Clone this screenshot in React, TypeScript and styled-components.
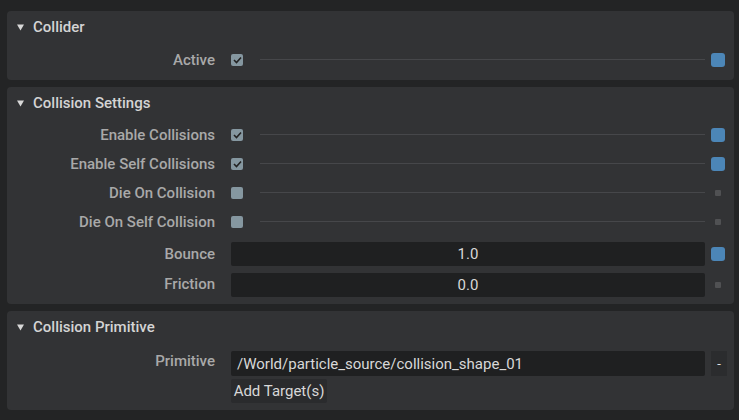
import React from 'react';
import styled, { createGlobalStyle } from 'styled-components';

const GlobalStyle = createGlobalStyle`
  html, body {
    margin: 0;
    padding: 0;
    background: #232425;
    font-family: Roboto, "Liberation Sans", sans-serif;
  }
`;

const Page = styled.div`
  width: 739px;
  height: 420px;
  box-sizing: border-box;
  padding: 11px 5px 0 7px;
  background: #232425;
  display: flex;
  flex-direction: column;
  gap: 7px;
`;

const Panel = styled.section<{ $bottom?: number }>`
  background: #323335;
  border-radius: 4px;
  padding-bottom: ${(p) => p.$bottom ?? 6}px;
`;

const Header = styled.div`
  height: 32px;
  display: flex;
  align-items: center;
  padding-left: 10px;
  gap: 9px;
  color: #d4d4d4;
  font-size: 15px;
  font-weight: 500;
`;

const Body = styled.div<{ $top?: number }>`
  padding-top: ${(p) => p.$top ?? 1}px;
  padding-right: 3px;
  display: flex;
  flex-direction: column;
`;

const Row = styled.div<{ $h: number }>`
  height: ${(p) => p.$h}px;
  display: grid;
  grid-template-columns: 208px 1fr 26px;
  column-gap: 16px;
  align-items: center;
`;

const Label = styled.div<{ $raise?: number }>`
  text-align: right;
  color: #a9a9a9;
  font-size: 15px;
  font-weight: 500;
  margin-top: ${(p) => (p.$raise ? -p.$raise * 2 : 0)}px;
`;

const CheckLine = styled.div`
  display: flex;
  align-items: center;
  gap: 17px;
  margin-right: -16px;
`;

const Check = styled.div`
  width: 12px;
  height: 12px;
  border-radius: 2px;
  background: #8597a0;
  flex: none;
  display: flex;
  align-items: center;
  justify-content: center;
`;

const Line = styled.div`
  flex: 1;
  height: 1px;
  background: #46474a;
`;

const Indicator = styled.div<{ $on: boolean }>`
  justify-self: center;
  width: ${(p) => (p.$on ? 14 : 6)}px;
  height: ${(p) => (p.$on ? 14 : 6)}px;
  border-radius: ${(p) => (p.$on ? 3 : 1)}px;
  background: ${(p) => (p.$on ? '#4c86b7' : '#505153')};
`;

const FloatGroup = styled.div`
  margin-top: 2px;
  display: flex;
  flex-direction: column;
`;

const Field = styled.div<{ $align?: string; $h?: number }>`
  height: ${(p) => p.$h ?? 24}px;
  margin-right: -16px;
  background: #1f2021;
  border-radius: 2px;
  display: flex;
  align-items: center;
  justify-content: ${(p) => p.$align ?? 'center'};
  padding: 0 6px;
  color: #d8d8d8;
  font-size: 15px;
`;

const SmallButton = styled.div`
  justify-self: end;
  margin-right: 4px;
  width: 16px;
  height: 25px;
  background: #2b2c2e;
  color: #e0e0e0;
  font-size: 13px;
  display: flex;
  align-items: center;
  justify-content: center;
`;

const AddButton = styled.div`
  margin-top: 3px;
  margin-left: 224px;
  width: 96px;
  height: 24px;
  background: #2a2b2d;
  border-radius: 2px;
  color: #d8d8d8;
  font-size: 15px;
  display: flex;
  align-items: center;
  justify-content: center;
`;

const Triangle = () => (
  <svg width="7" height="7" viewBox="0 0 7 7">
    <polygon points="0,0.5 7,0.5 3.5,6.5" fill="#d8d8d8" />
  </svg>
);

const Tick = () => (
  <svg width="9" height="8" viewBox="0 0 9 8">
    <polyline points="1,4 3.5,6.5 8,1.5" fill="none" stroke="#222" strokeWidth="1.6" />
  </svg>
);

const BoolRow: React.FC<{ label: string; on: boolean }> = ({ label, on }) => (
  <Row $h={29}>
    <Label>{label}</Label>
    <CheckLine>
      <Check>{on && <Tick />}</Check>
      <Line />
    </CheckLine>
    <Indicator $on={on} />
  </Row>
);

const FloatRow: React.FC<{ label: string; value: string; changed: boolean }> = ({ label, value, changed }) => (
  <Row $h={31}>
    <Label $raise={changed ? 0 : 0.5}>{label}</Label>
    <Field>{value}</Field>
    <Indicator $on={changed} />
  </Row>
);

export default function App() {
  return (
    <>
      <GlobalStyle />
      <Page>
        <Panel>
          <Header>
            <Triangle />
            Collider
          </Header>
          <Body $top={2}>
            <BoolRow label="Active" on />
          </Body>
        </Panel>

        <Panel $bottom={4}>
          <Header>
            <Triangle />
            Collision Settings
          </Header>
          <Body>
            <BoolRow label="Enable Collisions" on />
            <BoolRow label="Enable Self Collisions" on />
            <BoolRow label="Die On Collision" on={false} />
            <BoolRow label="Die On Self Collision" on={false} />
            <FloatGroup>
              <FloatRow label="Bounce" value="1.0" changed />
              <FloatRow label="Friction" value="0.0" changed={false} />
            </FloatGroup>
          </Body>
        </Panel>

        <Panel $bottom={7}>
          <Header>
            <Triangle />
            Collision Primitive
          </Header>
          <Body $top={8}>
            <Row $h={25}>
              <Label $raise={3}>Primitive</Label>
              <Field $align="flex-start" $h={25}>
                /World/particle_source/collision_shape_01
              </Field>
              <SmallButton>-</SmallButton>
            </Row>
            <AddButton>Add Target(s)</AddButton>
          </Body>
        </Panel>
      </Page>
    </>
  );
}
